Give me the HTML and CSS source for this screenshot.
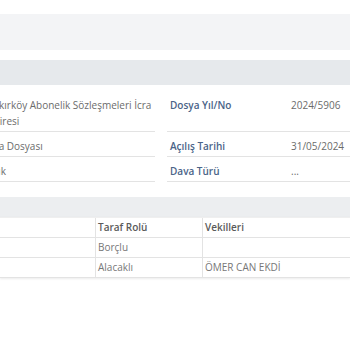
FILE: index.html
```html
<!DOCTYPE html>
<html lang="tr">
<head>
<meta charset="utf-8">
<link rel="stylesheet" href="styles.css">
</head>
<body>
<div class="page">
  <div class="band band-top"></div>
  <div class="band band-title"></div>
  <div class="details">
    <div class="cell value">Bakırköy Abonelik Sözleşmeleri İcra Dairesi</div>
    <div class="spacer"></div>
    <div class="cell label">Dosya Yıl/No</div>
    <div class="cell value">2024/5906</div>

    <div class="cell value">İcra Dosyası</div>
    <div class="spacer"></div>
    <div class="cell label">Açılış Tarihi</div>
    <div class="cell value">31/05/2024</div>

    <div class="cell value">Açık</div>
    <div class="spacer"></div>
    <div class="cell label">Dava Türü</div>
    <div class="cell value dots">...</div>
  </div>
  <div class="band band-section"></div>
  <div class="parties">
    <div class="row head">
      <div class="col c1"></div>
      <div class="col c2">Taraf Rolü</div>
      <div class="col c3">Vekilleri</div>
    </div>
    <div class="row">
      <div class="col c1"></div>
      <div class="col c2">Borçlu</div>
      <div class="col c3"></div>
    </div>
    <div class="row">
      <div class="col c1"></div>
      <div class="col c2">Alacaklı</div>
      <div class="col c3">ÖMER CAN EKDİ</div>
    </div>
  </div>
</div>
</body>
</html>
```

FILE: styles.css
```css
html, body {
  margin: 0;
  padding: 0;
  background: #ffffff;
  overflow: hidden;
}

body {
  width: 350px;
  height: 350px;
  font-family: "Open Sans", "Noto Sans", sans-serif;
  font-size: 10px;
  color: #6b6b6b;
}

.page {
  display: flex;
  flex-direction: column;
}

.band-top {
  margin-top: 14px;
  height: 36px;
  background: #f3f4f6;
}

.band-title {
  margin-top: 10px;
  height: 25px;
  background: #e6e9ec;
}

.details {
  margin-top: 6px;
  margin-left: -13px;
  display: grid;
  grid-template-columns: 168px 12px 122px 1fr;
}

.cell {
  padding: 6px 3px 2px 0;
  line-height: 16px;
  border-bottom: 1px solid #e3e3e3;
}

.details .value {
  color: #6b6b6b;
}

.details .label {
  padding-left: 3px;
  color: #4a6488;
  font-weight: 600;
}

.details .label + .value {
  padding-left: 2px;
}

.dots {
  color: #8a8a8a;
}

.band-section {
  margin-top: 15px;
  height: 20px;
  background: #eceef0;
}

.parties {
  margin-top: 1px;
  box-shadow: 0 -1px 1px rgba(0, 0, 0, 0.06), 0 1px 2px rgba(0, 0, 0, 0.08);
}

.row {
  display: grid;
  grid-template-columns: 95px 107px 1fr;
  border-bottom: 1px solid #e3e3e3;
  line-height: 19px;
}

.col {
  padding-left: 2px;
  color: #777777;
}

.col + .col {
  border-left: 1px solid #e3e3e3;
}

.head .col {
  color: #5a5a5a;
  font-weight: 600;
}
```
